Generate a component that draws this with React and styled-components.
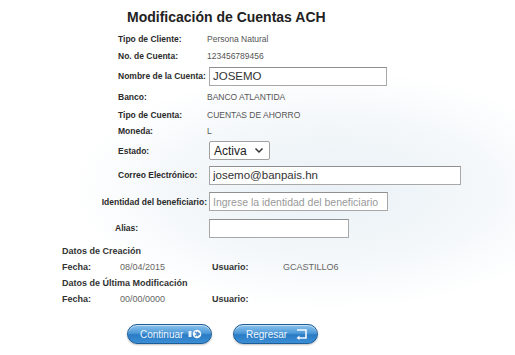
import React from 'react'
import styled, { createGlobalStyle } from 'styled-components'

const GlobalStyle = createGlobalStyle`
  html, body { margin: 0; padding: 0; }
  body {
    width: 515px;
    height: 355px;
    overflow: hidden;
    font-family: "Liberation Sans", Arial, sans-serif;
    background: radial-gradient(ellipse 260px 120px at 330px 190px, #eaf1f6 0%, #f3f7fa 55%, #ffffff 100%);
  }
`

const fields = [
  { label: 'Tipo de Cliente:', value: 'Persona Natural', h: 17 },
  { label: 'No. de Cuenta:', value: '123456789456', h: 18 },
  { label: 'Nombre de la Cuenta:', input: 'JOSEMO', w: 178, h: 22 },
  { label: 'Banco:', value: 'BANCO ATLANTIDA', h: 20 },
  { label: 'Tipo de Cuenta:', value: 'CUENTAS DE AHORRO', h: 16 },
  { label: 'Moneda:', value: 'L', h: 16 },
  { label: 'Estado:', select: 'Activa', h: 23 },
  { label: 'Correo Electrónico:', input: 'josemo@banpais.hn', w: 252, h: 26 },
  { label: 'Identidad del beneficiario:', placeholder: 'Ingrese la identidad del beneficiario', w: 179, h: 27, right: true },
  { label: 'Alias:', input: '', w: 140, h: 26, shift: -3 },
]

const ArrowIcon = () => (
  <svg width="14" height="10" viewBox="0 0 14 10">
    <rect x="0.5" y="2" width="3" height="6" fill="#eaf3fb" />
    <circle cx="9" cy="5" r="4.3" fill="#f4f8fc" />
    <path d="M7 2.8 L9.6 5 L7 7.2 M9 2.8 L11.6 5 L9 7.2" stroke="#3a7fc0" strokeWidth="1.1" fill="none" />
  </svg>
)

const BackIcon = () => (
  <svg width="13" height="11" viewBox="0 0 13 11">
    <path d="M2 1 H11 V9 H3" stroke="#f4f8fc" strokeWidth="1.6" fill="none" />
    <path d="M4.5 6.5 L1.5 9 L4.5 11" fill="#f4f8fc" />
  </svg>
)

const App = () => {
  return (
    <Page>
      <GlobalStyle />
      <Title>Modificación de Cuentas ACH</Title>
      <Form>
        {fields.map((f) => (
          <Row key={f.label} h={f.h}>
            <Label right={f.right} shift={f.shift}>{f.label}</Label>
            {f.value !== undefined && <Value>{f.value}</Value>}
            {f.input !== undefined && <TextInput w={f.w} defaultValue={f.input} />}
            {f.placeholder && <TextInput w={f.w} placeholder={f.placeholder} />}
            {f.select && (
              <Select>
                <span>{f.select}</span>
                <svg width="10" height="7" viewBox="0 0 10 7">
                  <path d="M1.5 1.5 L5 5 L8.5 1.5" stroke="#333" strokeWidth="1.5" fill="none" />
                </svg>
              </Select>
            )}
          </Row>
        ))}
      </Form>
      <Audit>
        <Section>Datos de Creación</Section>
        <AuditRow>
          <AuditLabel>Fecha:</AuditLabel>
          <AuditValue>08/04/2015</AuditValue>
          <AuditLabel>Usuario:</AuditLabel>
          <AuditValue>GCASTILLO6</AuditValue>
        </AuditRow>
        <Section>Datos de Última Modificación</Section>
        <AuditRow>
          <AuditLabel>Fecha:</AuditLabel>
          <AuditValue>00/00/0000</AuditValue>
          <AuditLabel>Usuario:</AuditLabel>
          <AuditValue></AuditValue>
        </AuditRow>
      </Audit>
      <Buttons>
        <PillButton>Continuar <ArrowIcon /></PillButton>
        <PillButton>Regresar <BackIcon /></PillButton>
      </Buttons>
    </Page>
  )
}

const Page = styled.div`
  width: 515px;
  height: 355px;
  box-sizing: border-box;
  padding-top: 7px;
  color: #333;
`

const Title = styled.h1`
  margin: 0 0 0 127px;
  font-size: 14px;
  line-height: 20px;
  font-weight: bold;
  color: #222;
`

const Form = styled.div`
  margin-top: 3px;
  padding-left: 118px;
  display: flex;
  flex-direction: column;
`

const Row = styled.div`
  display: grid;
  grid-template-columns: 91px auto;
  align-items: center;
  height: ${(p) => p.h}px;
`

const Label = styled.span`
  font-size: 8.5px;
  font-weight: bold;
  color: #2b2b2b;
  white-space: nowrap;
  justify-self: ${(p) => (p.right ? 'end' : 'start')};
  margin-right: ${(p) => (p.right ? '2px' : '0')};
  margin-left: ${(p) => (p.shift ? p.shift : 0)}px;
`

const Value = styled.span`
  font-size: 8.5px;
  color: #555;
  margin-left: -2px;
`

const TextInput = styled.input`
  width: ${(p) => p.w}px;
  height: 19px;
  box-sizing: border-box;
  border: 1px solid #a8a8a8;
  border-top-color: #8f8f8f;
  background: #fff;
  padding: 0 3px;
  font-family: "Liberation Sans", Arial, sans-serif;
  font-size: 11.5px;
  color: #333;
  outline: none;
  &::placeholder {
    color: #999;
    font-size: 10.5px;
  }
`

const Select = styled.div`
  width: 61px;
  height: 19px;
  box-sizing: border-box;
  border: 1px solid #a0a0a0;
  border-radius: 2px;
  background: #fff;
  display: flex;
  align-items: center;
  justify-content: space-between;
  padding: 0 5px 0 4px;
  font-size: 12px;
  color: #222;
`

const Audit = styled.div`
  margin-top: 2px;
  padding-left: 62px;
  display: flex;
  flex-direction: column;
`

const Section = styled.div`
  font-size: 9px;
  font-weight: bold;
  color: #333;
  height: 16px;
  line-height: 16px;
`

const AuditRow = styled.div`
  display: grid;
  grid-template-columns: 58px 92px 71px auto;
  height: 16px;
  align-items: center;
`

const AuditLabel = styled.span`
  font-size: 9px;
  font-weight: bold;
  color: #333;
`

const AuditValue = styled.span`
  font-size: 9px;
  color: #666;
`

const Buttons = styled.div`
  margin-top: 17px;
  padding-left: 127px;
  display: flex;
  gap: 21px;
`

const PillButton = styled.button`
  width: 85px;
  height: 20px;
  box-sizing: border-box;
  border: 1px solid #1f5d96;
  border-radius: 10px;
  background: linear-gradient(to bottom, #8cc3ec 0%, #4d9ad8 45%, #2a7bc4 55%, #3b8fd6 100%);
  box-shadow: inset 0 1px 0 rgba(255, 255, 255, 0.5), 0 1px 2px rgba(0, 0, 0, 0.25);
  display: flex;
  align-items: center;
  justify-content: space-between;
  padding: 0 9px 0 12px;
  font-family: "Liberation Sans", Arial, sans-serif;
  font-size: 10px;
  color: #eef5fc;
  cursor: pointer;
`

export default App
